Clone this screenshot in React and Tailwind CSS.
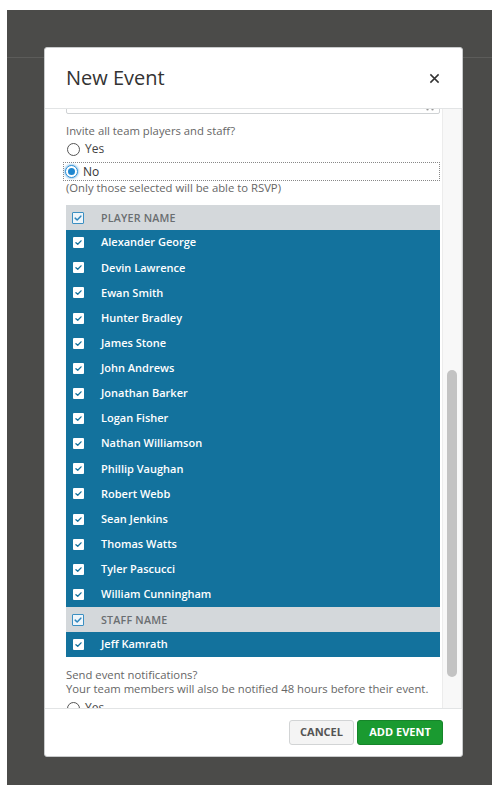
import React from "react";

const players = [
    "Alexander George",
    "Devin Lawrence",
    "Ewan Smith",
    "Hunter Bradley",
    "James Stone",
    "John Andrews",
    "Jonathan Barker",
    "Logan Fisher",
    "Nathan Williamson",
    "Phillip Vaughan",
    "Robert Webb",
    "Sean Jenkins",
    "Thomas Watts",
    "Tyler Pascucci",
    "William Cunningham",
];

const staff = ["Jeff Kamrath"];

function Check({ className = "" }) {
    return (
        <svg viewBox="0 0 12 12" className={className} fill="none">
            <path d="M2.6 6.2 L5 8.4 L9.4 3.8" stroke="currentColor" strokeWidth="1.8" strokeLinecap="round" strokeLinejoin="round" />
        </svg>
    );
}

function HeaderBox() {
    return (
        <span className="w-[12px] h-[12px] border border-[#3b8fc2] bg-[#eef5fa] rounded-[1px] flex items-center justify-center text-[#2f86bd]">
            <Check className="w-[10px] h-[10px]" />
        </span>
    );
}

function RowBox() {
    return (
        <span className="w-[11px] h-[11px] bg-white rounded-[1px] flex items-center justify-center text-[#13729d]">
            <Check className="w-[9px] h-[9px]" />
        </span>
    );
}

function Radio({ checked }) {
    if (checked) {
        return (
            <span className="w-[13px] h-[13px] rounded-full border border-[#2b8ed4] bg-white shadow-[0_0_2px_1px_rgba(60,150,220,0.45)] flex items-center justify-center">
                <span className="w-[7px] h-[7px] rounded-full bg-[#1f86cf]" />
            </span>
        );
    }
    return <span className="w-[13px] h-[13px] rounded-full border border-[#555] bg-white" />;
}

function GroupHeader({ label }) {
    return (
        <div className="h-[25.13px] bg-[#d4d8db] flex items-center pl-[6px]">
            <HeaderBox />
            <span className="ml-[17px] text-[10.7px] font-semibold tracking-[0.2px] text-[#6a6e71]">{label}</span>
        </div>
    );
}

function MemberRow({ name }) {
    return (
        <div className="h-[25.13px] bg-[#13729d] flex items-center pl-[7px]">
            <RowBox />
            <span className="ml-[17px] text-[11px] font-semibold text-white">{name}</span>
        </div>
    );
}

export default function App() {
    return (
        <div className="w-[492px] h-[785px] bg-white pl-[7px] pt-[10px] overflow-hidden font-['Open_Sans',sans-serif]">
            <div className="relative h-full bg-[#4b4b49] pt-[37px] pl-[37px]">
                {/* page header edge behind the overlay */}
                <div className="absolute left-0 right-0 top-[47px] h-px bg-[#5c5c5a]" />

                <div className="relative w-[419px] h-[710px] bg-white rounded-[3px] border border-[#c9cbcc] flex flex-col">
                    <div className="h-[61px] shrink-0 border-b border-[#e2e4e5] flex items-center justify-between pl-[21px] pr-[22px]">
                        <h2 className="text-[20px] text-[#333] leading-none -mt-[1px]">New Event</h2>
                        <svg viewBox="0 0 12 12" className="w-[11px] h-[11px] text-[#333]">
                            <path d="M1.5 1.5 L10.5 10.5 M10.5 1.5 L1.5 10.5" stroke="currentColor" strokeWidth="1.6" />
                        </svg>
                    </div>

                    <div className="flex-1 flex min-h-0">
                        <div className="w-[398px] overflow-hidden pl-[21px] pr-[2px]">
                            {/* select box scrolled mostly out of view */}
                            <div className="-mt-[25px] h-[30px] border border-[#cfd2d4] rounded-[2px] flex items-end justify-end pr-[5px] pb-[2px]">
                                <svg viewBox="0 0 8 3" className="w-[8px] h-[3px] text-[#999]">
                                    <circle cx="1.5" cy="1.5" r="1.1" fill="currentColor" />
                                    <circle cx="6.5" cy="1.5" r="1.1" fill="currentColor" />
                                </svg>
                            </div>

                            <p className="mt-[8px] text-[11.3px] leading-[18px] text-[#666]">Invite all team players and staff?</p>
                            <div className="h-[18px] flex items-center gap-[5px] pl-[1px]">
                                <Radio />
                                <span className="text-[12px] text-[#444]">Yes</span>
                            </div>
                            <div className="mt-[4px] -ml-[3px] h-[19px] border border-dotted border-[#888] flex items-center gap-[5px] pl-[1px]">
                                <Radio checked />
                                <span className="text-[12px] text-[#333]">No</span>
                            </div>
                            <p className="text-[11.3px] leading-[14px] text-[#666]">(Only those selected will be able to RSVP)</p>

                            <div className="mt-[10px]">
                                <GroupHeader label="PLAYER NAME" />
                                {players.map((p) => (
                                    <MemberRow key={p} name={p} />
                                ))}
                                <GroupHeader label="STAFF NAME" />
                                {staff.map((p) => (
                                    <MemberRow key={p} name={p} />
                                ))}
                            </div>

                            <p className="mt-[11px] text-[11.3px] leading-[14px] text-[#666]">Send event notifications?</p>
                            <p className="text-[11.3px] leading-[14px] text-[#666]">Your team members will also be notified 48 hours before their event.</p>
                            <div className="mt-[3px] h-[18px] flex items-center gap-[5px] pl-[1px]">
                                <Radio />
                                <span className="text-[12px] text-[#444]">Yes</span>
                            </div>
                        </div>

                        <div className="w-[20px] shrink-0 bg-[#f8f8f8] border-l border-r border-[#ececec] flex flex-col pt-[261px] pb-[31px] items-center">
                            <div className="w-[10px] flex-1 rounded-full bg-[#c3c3c3]" />
                        </div>
                    </div>

                    <div className="h-[48px] shrink-0 border-t border-[#e2e4e5] flex items-center justify-end gap-[3px] pr-[19px]">
                        <button className="h-[25px] w-[65px] rounded-[3px] border border-[#d2d4d5] bg-[#f4f4f4] text-[11px] font-bold text-[#555]">CANCEL</button>
                        <button className="h-[25px] w-[86px] rounded-[3px] border border-[#16852a] bg-[#1a9a30] text-[11px] font-bold text-white">ADD EVENT</button>
                    </div>
                </div>
            </div>
        </div>
    );
}
